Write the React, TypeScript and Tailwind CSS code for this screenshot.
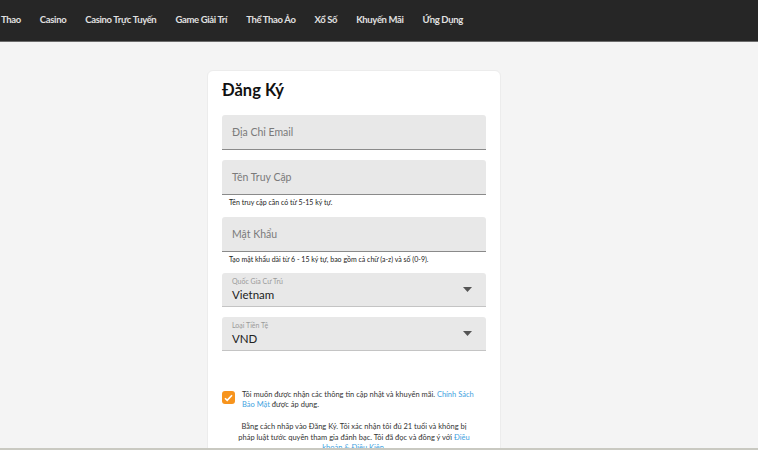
import React from "react";

const navItems = [
  "Thao",
  "Casino",
  "Casino Trực Tuyến",
  "Game Giải Trí",
  "Thể Thao Ảo",
  "Xổ Số",
  "Khuyến Mãi",
  "Ứng Dụng",
];

function TextField({ placeholder }: { placeholder: string }) {
  return (
    <div className="flex h-[35px] items-center rounded-t-[3px] border-b border-[#8a8a8a] bg-[#e8e8e8] px-[10px] pt-[2px] text-[10.5px] text-[#7a7a7a]">
      {placeholder}
    </div>
  );
}

function SelectField({ label, value }: { label: string; value: string }) {
  return (
    <div className="flex h-[34px] items-center justify-between rounded-t-[3px] border-b border-[#c4c4c4] bg-[#e8e8e8] pl-[10px] pr-[14px]">
      <div className="flex flex-col leading-none">
        <span className="text-[7px] text-[#9a9a9a]">{label}</span>
        <span className="mt-[4px] text-[11.5px] text-[#222]">{value}</span>
      </div>
      <svg width="9" height="5" viewBox="0 0 9 5">
        <path d="M0 0h9L4.5 5z" fill="#555" />
      </svg>
    </div>
  );
}

export default function App() {
  return (
    <div className="relative h-[450px] w-[758px] overflow-hidden bg-[#f4f4f4] font-['Lato',sans-serif]">
      <header className="flex h-[42px] items-center gap-[19px] border-b border-[#6b6b6b] bg-[#262626] pl-[1px] pb-[1px] text-[9.5px] font-bold text-[#e0e0e0]">
        {navItems.map((item) => (
          <span key={item} className="tracking-[-0.35px]">
            {item}
          </span>
        ))}
      </header>

      <div className="ml-[207px] mt-[28px] w-[294px] rounded-[6px] border border-[#ececec] bg-white px-[14px] pb-6 pt-[8px]">
        <h1 className="text-[16.5px] font-bold leading-[22px] text-[#111]">Đăng Ký</h1>

        <div className="mt-[14px]">
          <TextField placeholder="Địa Chỉ Email" />
        </div>
        <div className="mt-[10px]">
          <TextField placeholder="Tên Truy Cập" />
          <p className="mt-[2px] pl-[7px] text-[7px] leading-[10px] text-[#222]">
            Tên truy cập cần có từ 5-15 ký tự.
          </p>
        </div>
        <div className="mt-[10px]">
          <TextField placeholder="Mật Khẩu" />
          <p className="mt-[2px] pl-[7px] text-[7px] leading-[10px] text-[#222]">
            Tạo mật khẩu dài từ 6 - 15 ký tự, bao gồm cả chữ (a-z) và số (0-9).
          </p>
        </div>
        <div className="mt-[9px]">
          <SelectField label="Quốc Gia Cư Trú" value="Vietnam" />
        </div>
        <div className="mt-[10px]">
          <SelectField label="Loại Tiền Tệ" value="VND" />
        </div>

        <div className="mt-[39px] flex items-start gap-[7px]">
          <span className="mt-[1px] flex h-[13px] w-[13px] shrink-0 items-center justify-center rounded-[3px] bg-[#f7941d]">
            <svg width="9" height="8" viewBox="0 0 9 8">
              <path d="M1 4.2l2.2 2.2L8 1.2" fill="none" stroke="white" strokeWidth="1.6" />
            </svg>
          </span>
          <p className="text-[7.5px] leading-[10px] text-[#333]">
            Tôi muốn được nhận các thông tin cập nhật và khuyến mãi.{" "}
            <span className="text-[#3fa2e0]">Chính Sách Bảo Mật</span> được áp dụng.
          </p>
        </div>

        <p className="mt-[12px] px-[14px] text-center text-[7.5px] leading-[10.5px] text-[#333]">
          Bằng cách nhấp vào Đăng Ký. Tôi xác nhận tôi đủ 21 tuổi và không bị pháp luật tước quyền
          tham gia đánh bạc. Tôi đã đọc và đồng ý với{" "}
          <span className="text-[#3fa2e0]">Điều khoản &amp; Điều Kiện</span>.
        </p>
      </div>

      <div className="absolute bottom-0 left-0 h-[2px] w-full bg-[#c9c9c1]" />
    </div>
  );
}
